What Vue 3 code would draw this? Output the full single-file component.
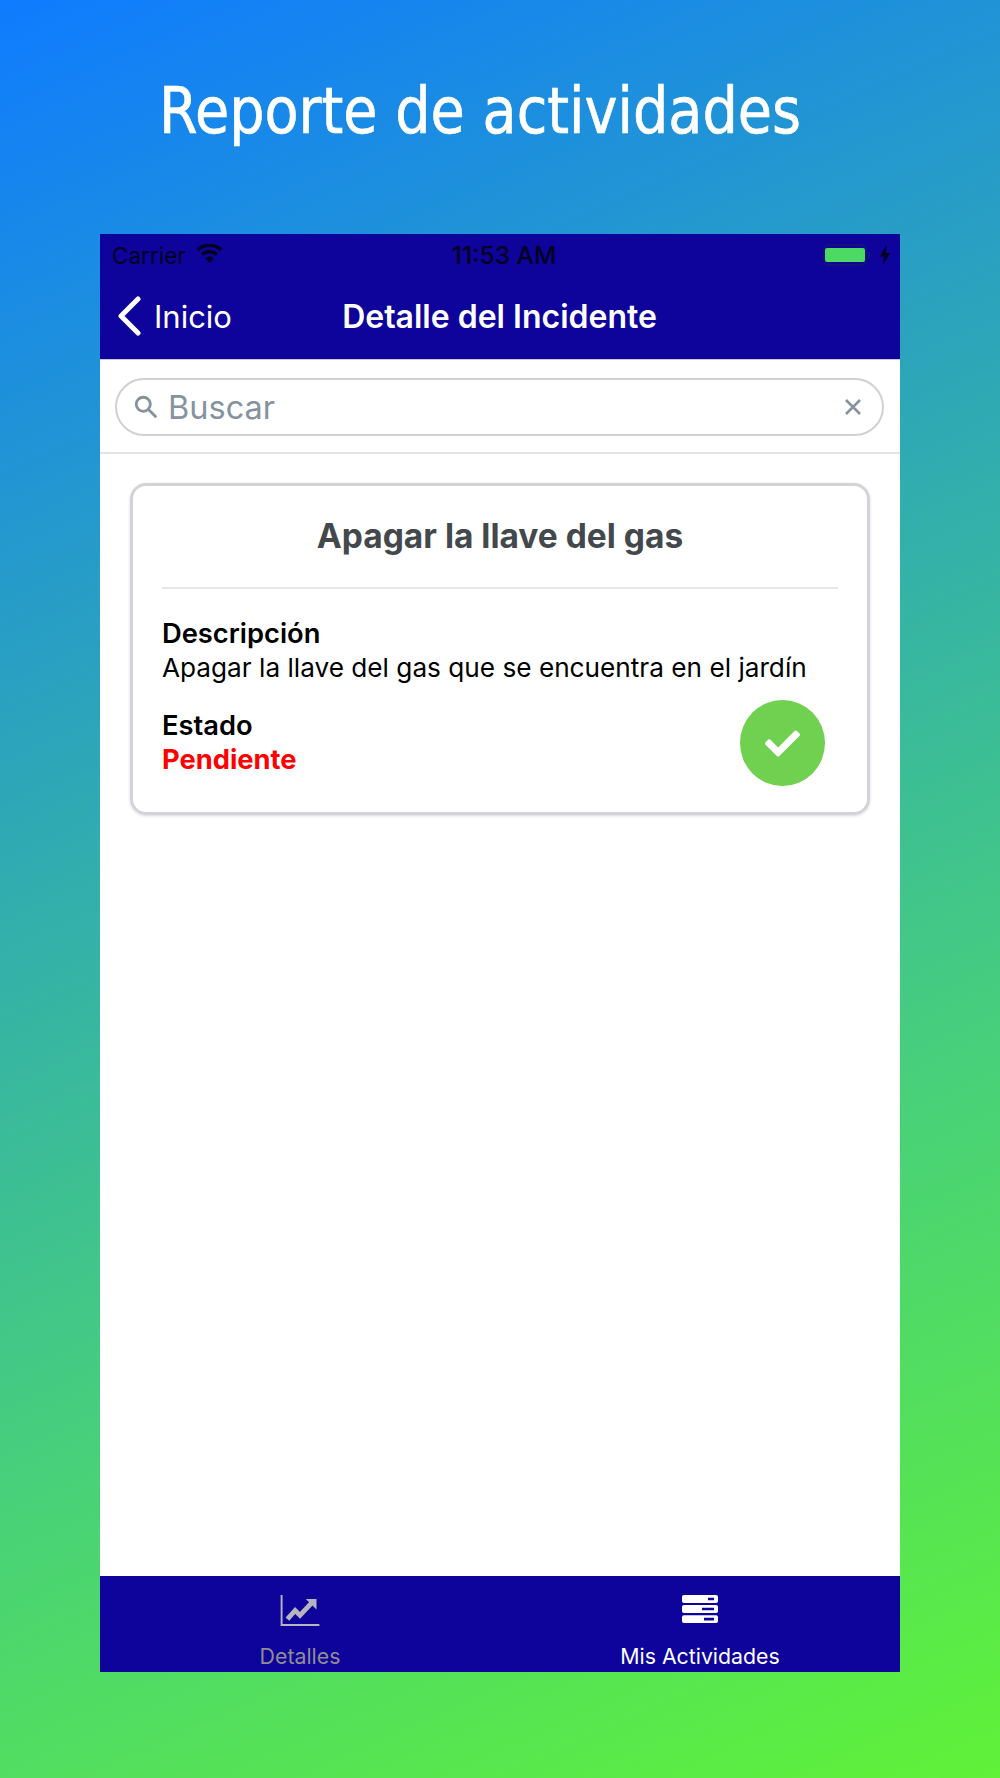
<template>
  <div class="page">
    <h1 class="headline"><span>Reporte de actividades</span></h1>

    <div class="phone">
      <div class="status-bar">
        <div class="status-left">
          <span>Carrier</span>
          <svg class="wifi" viewBox="0 0 28 20">
            <path d="M14 20 9.6 15a6.4 6.4 0 0 1 8.8 0Z" />
            <path d="M7.4 12.6 5 9.900a13.400 13.400 0 0 1 18 0l-2.400 2.700a9.800 9.800 0 0 0-13.200 0Z" />
            <path d="M2.900 7.500.4 4.700a20.400 20.400 0 0 1 27.200 0l-2.500 2.800a16.600 16.600 0 0 0-22.200 0Z" />
          </svg>
        </div>
        <span class="clock">11:53 AM</span>
        <div class="status-right">
          <span class="battery"><span class="battery-fill"></span></span>
          <span class="battery-cap"></span>
          <svg class="bolt" viewBox="0 0 10 20"><path d="M6.500 0 0 11.500h4L3 20l7-12H5.600Z" /></svg>
        </div>
      </div>

      <div class="nav-bar">
        <div class="back">
          <svg class="chevron" viewBox="0 0 24 40">
            <path d="M21 3 4 20l17 17" />
          </svg>
          <span>Inicio</span>
        </div>
        <span class="nav-title">Detalle del Incidente</span>
        <span></span>
      </div>

      <div class="search-wrap">
        <div class="search">
          <svg class="search-icon" viewBox="0 0 24 24">
            <circle cx="9.500" cy="9.500" r="6.500" />
            <path d="m14.500 14.500 7 7" />
          </svg>
          <span class="search-text">Buscar</span>
          <svg class="clear-icon" viewBox="0 0 18 18">
            <path d="m2 2 14 14M16 2 2 16" />
          </svg>
        </div>
      </div>

      <main class="content">
        <section class="card">
          <h2 class="card-title">Apagar la llave del gas</h2>
          <div class="card-body">
            <div class="field">
              <span class="label">Descripción</span>
              <span class="value">Apagar la llave del gas que se encuentra en el jardín</span>
            </div>
            <div class="state-row">
              <div class="field">
                <span class="label">Estado</span>
                <span class="pending">Pendiente</span>
              </div>
              <button class="done">
                <svg viewBox="0 0 512 512">
                  <path d="M173.898 439.404l-166.4-166.4c-9.997-9.997-9.997-26.206 0-36.204l36.203-36.204c9.997-9.998 26.207-9.998 36.204 0L192 312.69 432.095 72.596c9.997-9.997 26.207-9.997 36.204 0l36.203 36.204c9.997 9.997 9.997 26.206 0 36.204l-294.4 294.401c-9.998 9.997-26.207 9.997-36.204-.001z" />
                </svg>
              </button>
            </div>
          </div>
        </section>
      </main>

      <nav class="tab-bar">
        <div class="tab">
          <svg class="tab-icon chart" viewBox="0 0 40 32">
            <path class="axis" d="M1 0v31h39" />
            <path class="line" d="m7 25 8-9 5 5 13-14" />
            <path class="tip" d="M26 4h11v11Z" />
          </svg>
          <span>Detalles</span>
        </div>
        <div class="tab active">
          <svg class="tab-icon server" viewBox="0 0 36 32" preserveAspectRatio="none">
            <path fill-rule="evenodd" d="M2 0h32a2 2 0 0 1 2 2v5a2 2 0 0 1-2 2H2a2 2 0 0 1-2-2V2a2 2 0 0 1 2-2Zm24 3v3h6V3Z" />
            <path fill-rule="evenodd" d="M2 11.500h32a2 2 0 0 1 2 2v5a2 2 0 0 1-2 2H2a2 2 0 0 1-2-2v-5a2 2 0 0 1 2-2Zm18 3v3h12v-3Z" />
            <path fill-rule="evenodd" d="M2 23h32a2 2 0 0 1 2 2v5a2 2 0 0 1-2 2H2a2 2 0 0 1-2-2v-5a2 2 0 0 1 2-2Zm20 3v3h10v-3Z" />
          </svg>
          <span>Mis Actividades</span>
        </div>
      </nav>
    </div>
  </div>
</template>

<script setup>
</script>

<style>
html,
body {
  margin: 0;
}
</style>

<style scoped>
.page {
  box-sizing: border-box;
  width: 1000px;
  height: 1778px;
  padding: 0 100px;
  background: linear-gradient(156deg, #0f7bff 0%, #2ba3bd 33%, #47cf7c 66%, #60f238 100%);
  font-family: Inter, "Noto Sans", sans-serif;
}

.headline {
  box-sizing: border-box;
  height: 234px;
  margin: 0;
  padding: 69px 0 0 59px;
  color: #fff;
  font-family: "DejaVu Sans Condensed", "DejaVu Sans", sans-serif;
  font-size: 64px;
  font-weight: 400;
  line-height: 84px;
  white-space: nowrap;
}

/* tahoma is not installed, so dejavu gets narrowed and thickened to stand in */
.headline span {
  display: inline-block;
  -webkit-text-stroke: 0.6px #fff;
  transform: scaleX(0.967);
  transform-origin: left center;
}

.phone {
  display: flex;
  flex-direction: column;
  height: 1438px;
  background: #fff;
}

.status-bar {
  display: grid;
  grid-template-columns: 1fr auto 1fr;
  align-items: center;
  height: 42px;
  padding: 0 10px 0 12px;
  background: #0e039b;
  color: #04021f;
  font-size: 22.5px;
}

.status-left,
.status-right {
  display: flex;
  align-items: center;
}

.status-right {
  justify-content: flex-end;
}

.wifi {
  width: 27px;
  height: 19px;
  margin: -4px 0 0 10px;
  fill: #04021f;
}

.clock {
  margin-left: 6px;
  font-size: 24.5px;
  font-weight: 500;
}

.battery {
  box-sizing: border-box;
  width: 44px;
  height: 22px;
  padding: 2px 0;
  border: 2px solid #17127a;
  border-radius: 6px;
}

.battery-fill {
  display: block;
  height: 100%;
  border-radius: 2px;
  background: #4cd964;
}

.battery-cap {
  width: 2px;
  height: 7px;
  margin-left: 1px;
  background: #17127a;
}

.bolt {
  width: 10px;
  height: 20px;
  margin-left: 10px;
  fill: #04021f;
}

.nav-bar {
  display: grid;
  grid-template-columns: 1fr auto 1fr;
  align-items: center;
  box-sizing: border-box;
  height: 84px;
  padding: 0 18px 3px 17px;
  border-bottom: 1px solid #c9c8d8;
  background: #0e039b;
  color: #fff;
}

.back {
  display: flex;
  align-items: center;
  gap: 13px;
  font-size: 31px;
}

.chevron {
  width: 24px;
  height: 40px;
  fill: none;
  stroke: #fff;
  stroke-width: 5;
  stroke-linecap: round;
  stroke-linejoin: round;
}

.nav-title {
  font-size: 32px;
  font-weight: 600;
}

.search-wrap {
  padding: 18px 16px 16px 15px;
  border-bottom: 2px solid #e3e4e8;
}

.search {
  display: flex;
  align-items: center;
  box-sizing: border-box;
  height: 58px;
  padding: 0 20px 0 16px;
  border: 2px solid #d0d1d6;
  border-radius: 29px;
}

.search-icon {
  width: 26px;
  height: 26px;
  fill: none;
  stroke: #86939e;
  stroke-width: 2.6;
}

.search-text {
  flex: 1;
  margin-left: 9px;
  color: #86939e;
  font-size: 32.5px;
}

.clear-icon {
  width: 18px;
  height: 18px;
  fill: none;
  stroke: #86939e;
  stroke-width: 2.6;
}

.content {
  flex: 1;
  padding: 29px 30px 0 30px;
}

.card {
  box-sizing: border-box;
  height: 332px;
  padding: 0 29px;
  border: 3px solid #d2d2d8;
  border-radius: 16px;
  box-shadow: 0 1px 3px rgba(0, 0, 0, 0.15);
}

.card-title {
  height: 101px;
  margin: 0;
  border-bottom: 2px solid #e1e8ee;
  color: #43484d;
  font-size: 33.5px;
  font-weight: 700;
  line-height: 100px;
  text-align: center;
}

.card-body {
  padding: 28px 0 0;
}

.field {
  display: flex;
  flex-direction: column;
}

.label {
  color: #000;
  font-size: 27.3px;
  font-weight: 600;
  line-height: 34px;
}

.value {
  color: #000;
  font-size: 26.2px;
  line-height: 34px;
}

.pending {
  color: #f00;
  font-size: 27.3px;
  font-weight: 700;
  line-height: 33px;
}

.state-row {
  display: flex;
  align-items: center;
  justify-content: space-between;
  margin-top: 14px;
  padding-right: 13px;
}

.done {
  display: flex;
  align-items: center;
  justify-content: center;
  width: 85px;
  height: 86px;
  margin-top: 1px;
  padding: 0;
  border: 0;
  border-radius: 50%;
  background: #6fd14f;
}

.done svg {
  width: 35px;
  height: 35px;
  fill: #fff;
}

.tab-bar {
  display: grid;
  grid-template-columns: 1fr 1fr;
  height: 96px;
  background: #0e039b;
}

.tab {
  display: flex;
  flex-direction: column;
  align-items: center;
  padding-top: 19px;
  color: #8e8e93;
  font-size: 21.3px;
}

.tab.active {
  color: #fff;
}

.tab span {
  margin-top: 17px;
  line-height: 26px;
}

.tab-icon {
  height: 31px;
}

.chart {
  width: 40px;
}

.axis {
  fill: none;
  stroke: #b5b5bd;
  stroke-width: 2;
}

.line {
  fill: none;
  stroke: #b5b5bd;
  stroke-width: 5;
}

.tip {
  fill: #b5b5bd;
}

.server {
  width: 36px;
  height: 28px;
  margin-bottom: 3px;
  fill: #fff;
}
</style>
